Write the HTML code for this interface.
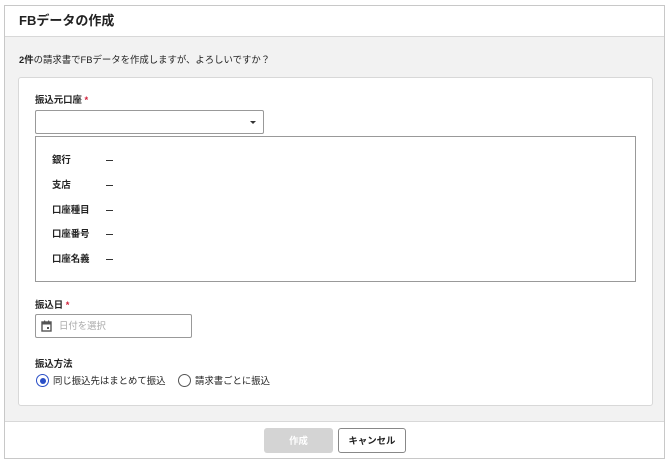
<!DOCTYPE html>
<html><head><meta charset="utf-8"><style>
*{box-sizing:border-box;margin:0;padding:0}
body{width:669px;height:463px;background:#fff;font-family:"Liberation Sans","Noto Sans CJK JP",sans-serif;color:#222;position:relative;overflow:hidden}
.a{position:absolute}
.t{font-size:9.4px;white-space:nowrap;line-height:12px}
.b{font-weight:bold}
.req{color:#d0213b}
.d{position:absolute;width:7px;height:1px;background:#333}
</style></head><body>
<div class="a" style="left:4px;top:5px;width:661px;height:454px;border:1px solid #c8c8c8;background:#f2f2f2"></div>
<div class="a" style="left:5px;top:6px;width:659px;height:31px;background:#fff;border-bottom:1px solid #d8d8d8"></div>
<div class="a b" style="left:19px;top:12px;font-size:13px;line-height:18px">FBデータの作成</div>
<div class="a t" style="left:19px;top:54px"><b>2件</b>の請求書でFBデータを作成しますが、よろしいですか？</div>
<div class="a" style="left:18px;top:77px;width:635px;height:329px;background:#fff;border:1px solid #d8d8d8;border-radius:3px"></div>
<div class="a t b" style="left:35px;top:94px">振込元口座<span class="req"> *</span></div>
<div class="a" style="left:35px;top:110px;width:229px;height:24px;border:1px solid #999;border-radius:2px;background:#fff"></div>
<div class="a" style="left:250px;top:121px;width:0;height:0;border-left:3px solid transparent;border-right:3px solid transparent;border-top:3px solid #333"></div>
<div class="a" style="left:35px;top:136px;width:601px;height:146px;border:1px solid #999;background:#fff"></div>
<div class="a t b" style="left:52px;top:154px">銀行</div><div class="d" style="left:106px;top:160px"></div>
<div class="a t b" style="left:52px;top:179px">支店</div><div class="d" style="left:106px;top:185px"></div>
<div class="a t b" style="left:52px;top:204px">口座種目</div><div class="d" style="left:106px;top:210px"></div>
<div class="a t b" style="left:52px;top:228px">口座番号</div><div class="d" style="left:106px;top:234px"></div>
<div class="a t b" style="left:52px;top:253px">口座名義</div><div class="d" style="left:106px;top:259px"></div>
<div class="a t b" style="left:35px;top:299px">振込日<span class="req"> *</span></div>
<div class="a" style="left:35px;top:314px;width:157px;height:24px;border:1px solid #999;border-radius:2px;background:#fff"></div>
<svg class="a" style="left:41px;top:320px" width="11" height="12" viewBox="0 0 11 12"><rect x="1" y="2" width="9" height="9" fill="none" stroke="#555" stroke-width="1.4"/><rect x="1" y="2" width="9" height="2.5" fill="#555"/><rect x="3" y="0.5" width="1.2" height="2" fill="#555"/><rect x="7" y="0.5" width="1.2" height="2" fill="#555"/><rect x="6" y="7" width="2" height="2" fill="#555"/></svg>
<div class="a t" style="left:59px;top:320px;color:#aaa">日付を選択</div>
<div class="a t b" style="left:35px;top:358px">振込方法</div>
<div class="a" style="left:36px;top:374px;width:13px;height:13px;border:1.5px solid #2a4fc7;border-radius:50%"></div>
<div class="a" style="left:39.5px;top:377.5px;width:6px;height:6px;background:#2a4fc7;border-radius:50%"></div>
<div class="a t" style="left:53px;top:375px">同じ振込先はまとめて振込</div>
<div class="a" style="left:178px;top:374px;width:13px;height:13px;border:1.5px solid #555;border-radius:50%"></div>
<div class="a t" style="left:195px;top:375px">請求書ごとに振込</div>
<div class="a" style="left:5px;top:421px;width:659px;height:37px;background:#fff;border-top:1px solid #d8d8d8"></div>
<div class="a t b" style="left:264px;top:428px;width:69px;height:25px;background:#d4d4d4;border-radius:3px;color:#fff;text-align:center;line-height:25px">作成</div>
<div class="a t b" style="left:338px;top:428px;width:68px;height:25px;border:1px solid #888;border-radius:3px;background:#fff;text-align:center;line-height:23px">キャンセル</div>
</body></html>
